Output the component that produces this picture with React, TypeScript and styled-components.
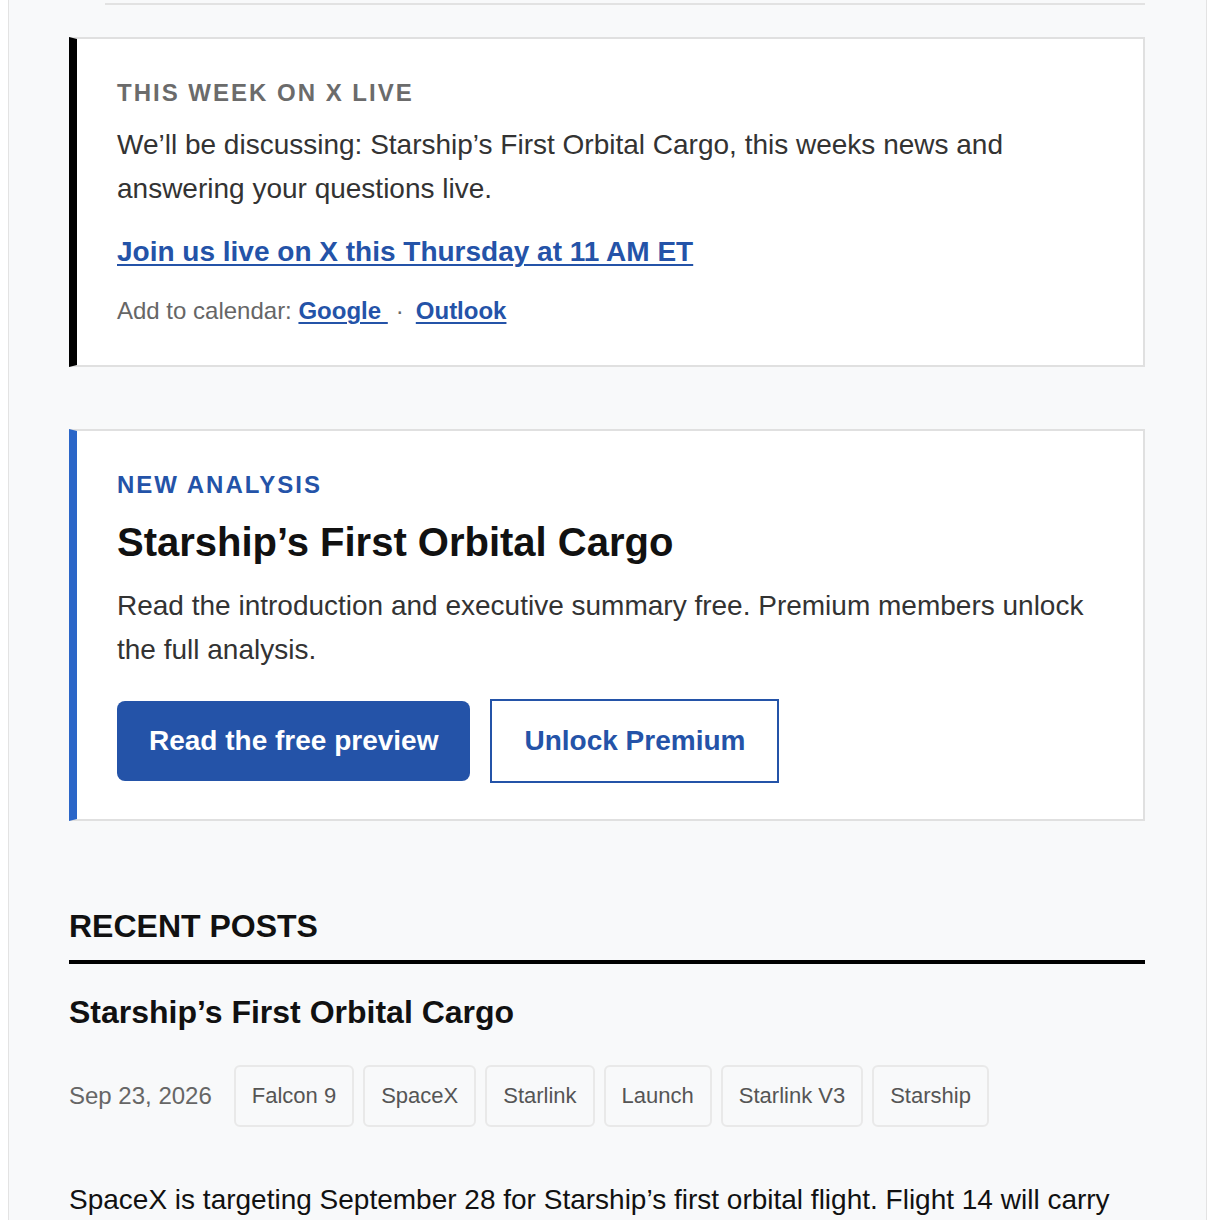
import React from 'react';
import styled, { createGlobalStyle } from 'styled-components';

const GlobalStyle = createGlobalStyle`
  html, body {
    margin: 0;
    background: #ffffff;
    overflow: hidden;
  }
  body {
    margin: 0 8px;
    font-family: "Liberation Sans", Arial, Helvetica, sans-serif;
  }
`;

const BLUE = '#2453a8';

const Page = styled.div`
  box-sizing: border-box;
  width: 1199px;
  height: 1220px;
  overflow: hidden;
  background: #f8f9fa;
  border-left: 1px solid #e3e3e3;
  border-right: 1px solid #e3e3e3;
  padding: 3px 61px 0 60px;
`;

const PrevDivider = styled.div`
  margin-left: 36px;
  border-bottom: 2px solid #e2e2e2;
`;

const Card = styled.section<{ $accent: string; $first?: boolean }>`
  margin-top: ${p => (p.$first ? '32px' : '62px')};
  background: #ffffff;
  border: 2px solid #e0e0e0;
  border-left: 8px solid ${p => p.$accent};
  padding: 40px 40px 36px 40px;
`;

const Eyebrow = styled.div<{ $color: string }>`
  font-size: 24px;
  line-height: 28px;
  font-weight: 700;
  letter-spacing: 2px;
  text-transform: uppercase;
  color: ${p => p.$color};
  margin-bottom: 16px;
`;

const CardTitle = styled.h2`
  margin: 19px 0 18px;
  font-size: 40px;
  line-height: 48px;
  font-weight: 700;
  color: #111;
`;

const BodyText = styled.p<{ $gap?: number }>`
  margin: 0 0 ${p => p.$gap ?? 20}px;
  font-size: 28px;
  line-height: 44px;
  color: #333;
`;

const LiveLink = styled.a`
  display: block;
  margin-bottom: 20px;
  font-size: 28px;
  line-height: 42px;
  font-weight: 700;
  color: ${BLUE};
  text-decoration: underline;
  text-decoration-thickness: 2px;
  text-underline-offset: 3px;
`;

const CalendarRow = styled.div`
  font-size: 24px;
  line-height: 36px;
  color: #666;
`;

const CalLink = styled.a`
  font-weight: 700;
  color: ${BLUE};
  text-decoration: underline;
  text-decoration-thickness: 2px;
  text-underline-offset: 3px;
  white-space: pre;
`;

const Dot = styled.span`
  margin: 0 12px 0 8px;
`;

const ButtonRow = styled.div`
  display: flex;
  align-items: center;
  gap: 20px;
`;

const Button = styled.a<{ $variant: 'solid' | 'outline' }>`
  display: inline-block;
  font-size: 28px;
  line-height: 32px;
  font-weight: 700;
  text-decoration: none;
  padding: 24px 32px;
  border-radius: ${p => (p.$variant === 'solid' ? '8px' : '0')};
  background: ${p => (p.$variant === 'solid' ? BLUE : '#ffffff')};
  color: ${p => (p.$variant === 'solid' ? '#ffffff' : BLUE)};
  border: ${p => (p.$variant === 'solid' ? 'none' : `2px solid ${BLUE}`)};
`;

const SectionHeading = styled.h2`
  margin: 86px 0 0;
  padding-bottom: 15px;
  border-bottom: 4px solid #000;
  font-size: 32px;
  line-height: 38px;
  font-weight: 700;
  color: #111;
`;

const PostTitle = styled.h3`
  margin: 28px 0 0;
  font-size: 32px;
  line-height: 40px;
  font-weight: 700;
  color: #111;
`;

const MetaRow = styled.div`
  display: flex;
  align-items: center;
  gap: 9px;
  margin-top: 33px;
`;

const PostDate = styled.span`
  font-size: 24px;
  color: #666;
  margin-right: 13px;
`;

const Tag = styled.span`
  font-size: 22px;
  line-height: 30px;
  color: #555;
  padding: 14px 16px;
  border: 2px solid #e9e9e9;
  border-radius: 6px;
  background: #f8f9fa;
`;

const Excerpt = styled.p`
  margin: 51px 0 0;
  font-size: 28px;
  line-height: 44px;
  color: #111;
`;

const tags = ['Falcon 9', 'SpaceX', 'Starlink', 'Launch', 'Starlink V3', 'Starship'];

export default function App() {
  return (
    <>
      <GlobalStyle />
      <Page>
        <PrevDivider />

        <Card $accent="#000000" $first>
          <Eyebrow $color="#6b6b6b">This week on X Live</Eyebrow>
          <BodyText>
            We’ll be discussing: Starship’s First Orbital Cargo, this weeks news and answering
            your questions live.
          </BodyText>
          <LiveLink href="#">Join us live on X this Thursday at 11 AM ET</LiveLink>
          <CalendarRow>
            Add to calendar: <CalLink href="#">{'Google '}</CalLink>
            <Dot>·</Dot>
            <CalLink href="#">Outlook</CalLink>
          </CalendarRow>
        </Card>

        <Card $accent="#2b66c8">
          <Eyebrow $color={BLUE}>New Analysis</Eyebrow>
          <CardTitle>Starship’s First Orbital Cargo</CardTitle>
          <BodyText $gap={27}>
            Read the introduction and executive summary free. Premium members unlock the full
            analysis.
          </BodyText>
          <ButtonRow>
            <Button href="#" $variant="solid">Read the free preview</Button>
            <Button href="#" $variant="outline">Unlock Premium</Button>
          </ButtonRow>
        </Card>

        <SectionHeading>RECENT POSTS</SectionHeading>
        <PostTitle>Starship’s First Orbital Cargo</PostTitle>
        <MetaRow>
          <PostDate>Sep 23, 2026</PostDate>
          {tags.map(t => (
            <Tag key={t}>{t}</Tag>
          ))}
        </MetaRow>
        <Excerpt>
          SpaceX is targeting September 28 for Starship’s first orbital flight. Flight 14 will carry
          the first full load of Starlink V3 satellites to orbit.
        </Excerpt>
      </Page>
    </>
  );
}
